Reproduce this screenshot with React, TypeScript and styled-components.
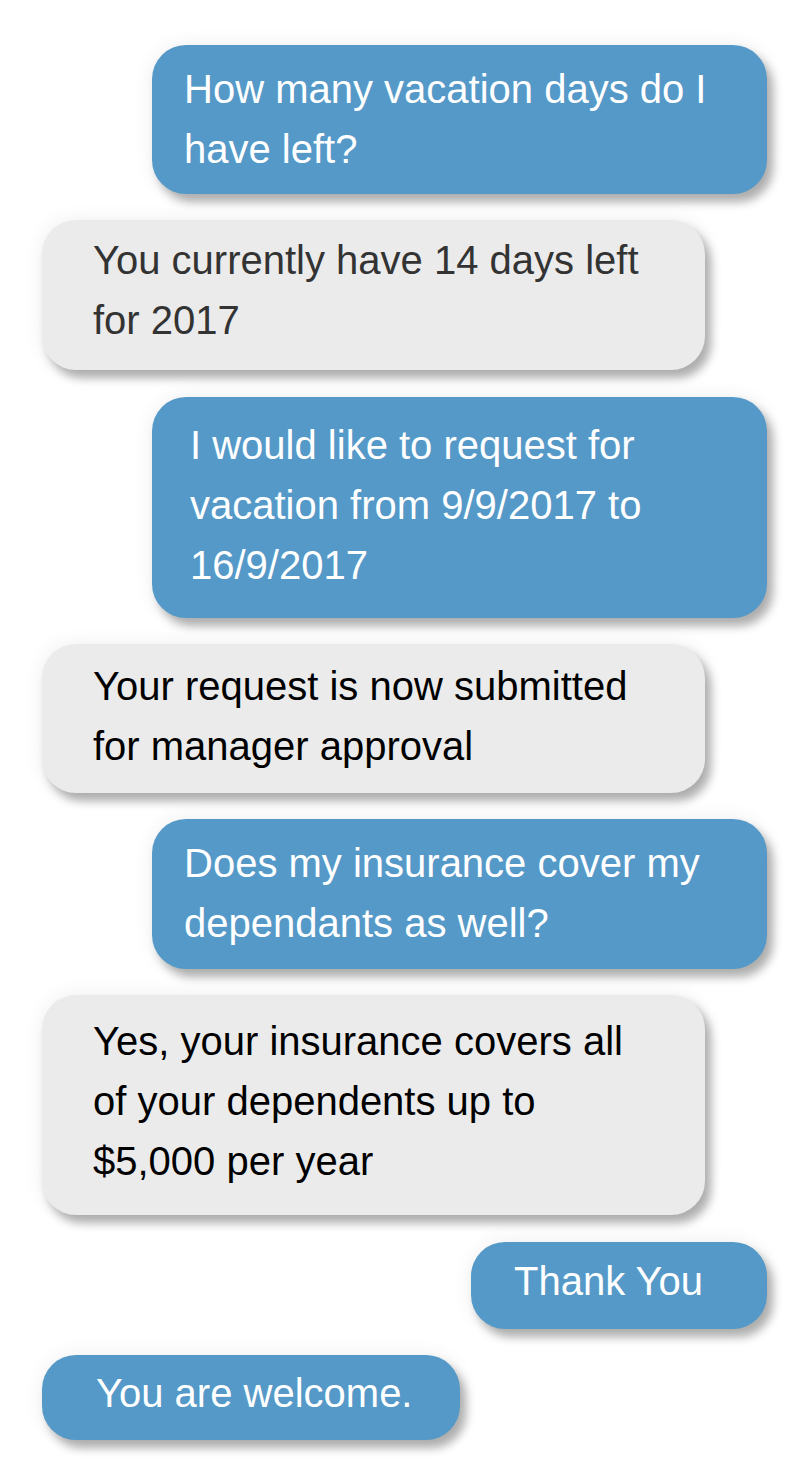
import React from "react";
import styled, { createGlobalStyle, css } from "styled-components";

const GlobalStyle = createGlobalStyle`
  html, body { margin: 0; padding: 0; background: #ffffff; }
  body { font-family: "Liberation Sans", Arial, sans-serif; }
`;

const Thread = styled.div`
  display: flex;
  flex-direction: column;
  gap: 26.3px;
  padding: 45px 43px 30px 42px;
  width: 810px;
  box-sizing: border-box;
`;

type Side = "me" | "bot";

const Bubble = styled.div<{
  $side: Side;
  $tone: "blue" | "grey";
  $ink?: string;
  $w: number;
  $pt: number;
  $pb: number;
  $pl: number;
}>`
  box-sizing: border-box;
  width: ${(p) => p.$w}px;
  align-self: ${(p) => (p.$side === "me" ? "flex-end" : "flex-start")};
  padding: ${(p) => `${p.$pt}px 10px ${p.$pb}px ${p.$pl}px`};
  border-radius: 34px;
  font-size: 40px;
  line-height: 60px;
  white-space: nowrap;
  box-shadow: 6px 8px 10px rgba(0, 0, 0, 0.3), 0 0 20px rgba(0, 0, 0, 0.07);
  ${(p) =>
    p.$tone === "blue"
      ? css`
          background: #5599c8;
          color: #ffffff;
        `
      : css`
          background: #ebebeb;
          color: ${p.$ink ?? "#000000"};
        `}
`;

const Line = styled.div``;

type Msg = {
  side: Side;
  tone: "blue" | "grey";
  ink?: string;
  w: number;
  pt: number;
  pb: number;
  pl: number;
  lines: string[];
};

const messages: Msg[] = [
  { side: "me", tone: "blue", w: 615, pt: 14, pb: 15, pl: 32, lines: ["How many vacation days do I", "have left?"] },
  { side: "bot", tone: "grey", ink: "#333333", w: 663, pt: 10, pb: 20, pl: 51, lines: ["You currently have 14 days left", "for 2017"] },
  { side: "me", tone: "blue", w: 615, pt: 18, pb: 23, pl: 38, lines: ["I would like to request for", "vacation from 9/9/2017 to", "16/9/2017"] },
  { side: "bot", tone: "grey", w: 663, pt: 12, pb: 17, pl: 51, lines: ["Your request is now submitted", "for manager approval"] },
  { side: "me", tone: "blue", w: 615, pt: 14, pb: 16, pl: 32, lines: ["Does my insurance cover my", "dependants as well?"] },
  { side: "bot", tone: "grey", w: 663, pt: 16, pb: 24, pl: 51, lines: ["Yes, your insurance covers all", "of your dependents up to", "$5,000 per year"] },
  { side: "me", tone: "blue", w: 296, pt: 9, pb: 18, pl: 43, lines: ["Thank You"] },
  { side: "bot", tone: "blue", w: 418, pt: 8, pb: 17, pl: 54, lines: ["You are welcome."] },
];

export default function App() {
  return (
    <>
      <GlobalStyle />
      <Thread>
        {messages.map((m, i) => (
          <Bubble
            key={i}
            $side={m.side}
            $tone={m.tone}
            $ink={m.ink}
            $w={m.w}
            $pt={m.pt}
            $pb={m.pb}
            $pl={m.pl}
          >
            {m.lines.map((l, j) => (
              <Line key={j}>{l}</Line>
            ))}
          </Bubble>
        ))}
      </Thread>
    </>
  );
}
